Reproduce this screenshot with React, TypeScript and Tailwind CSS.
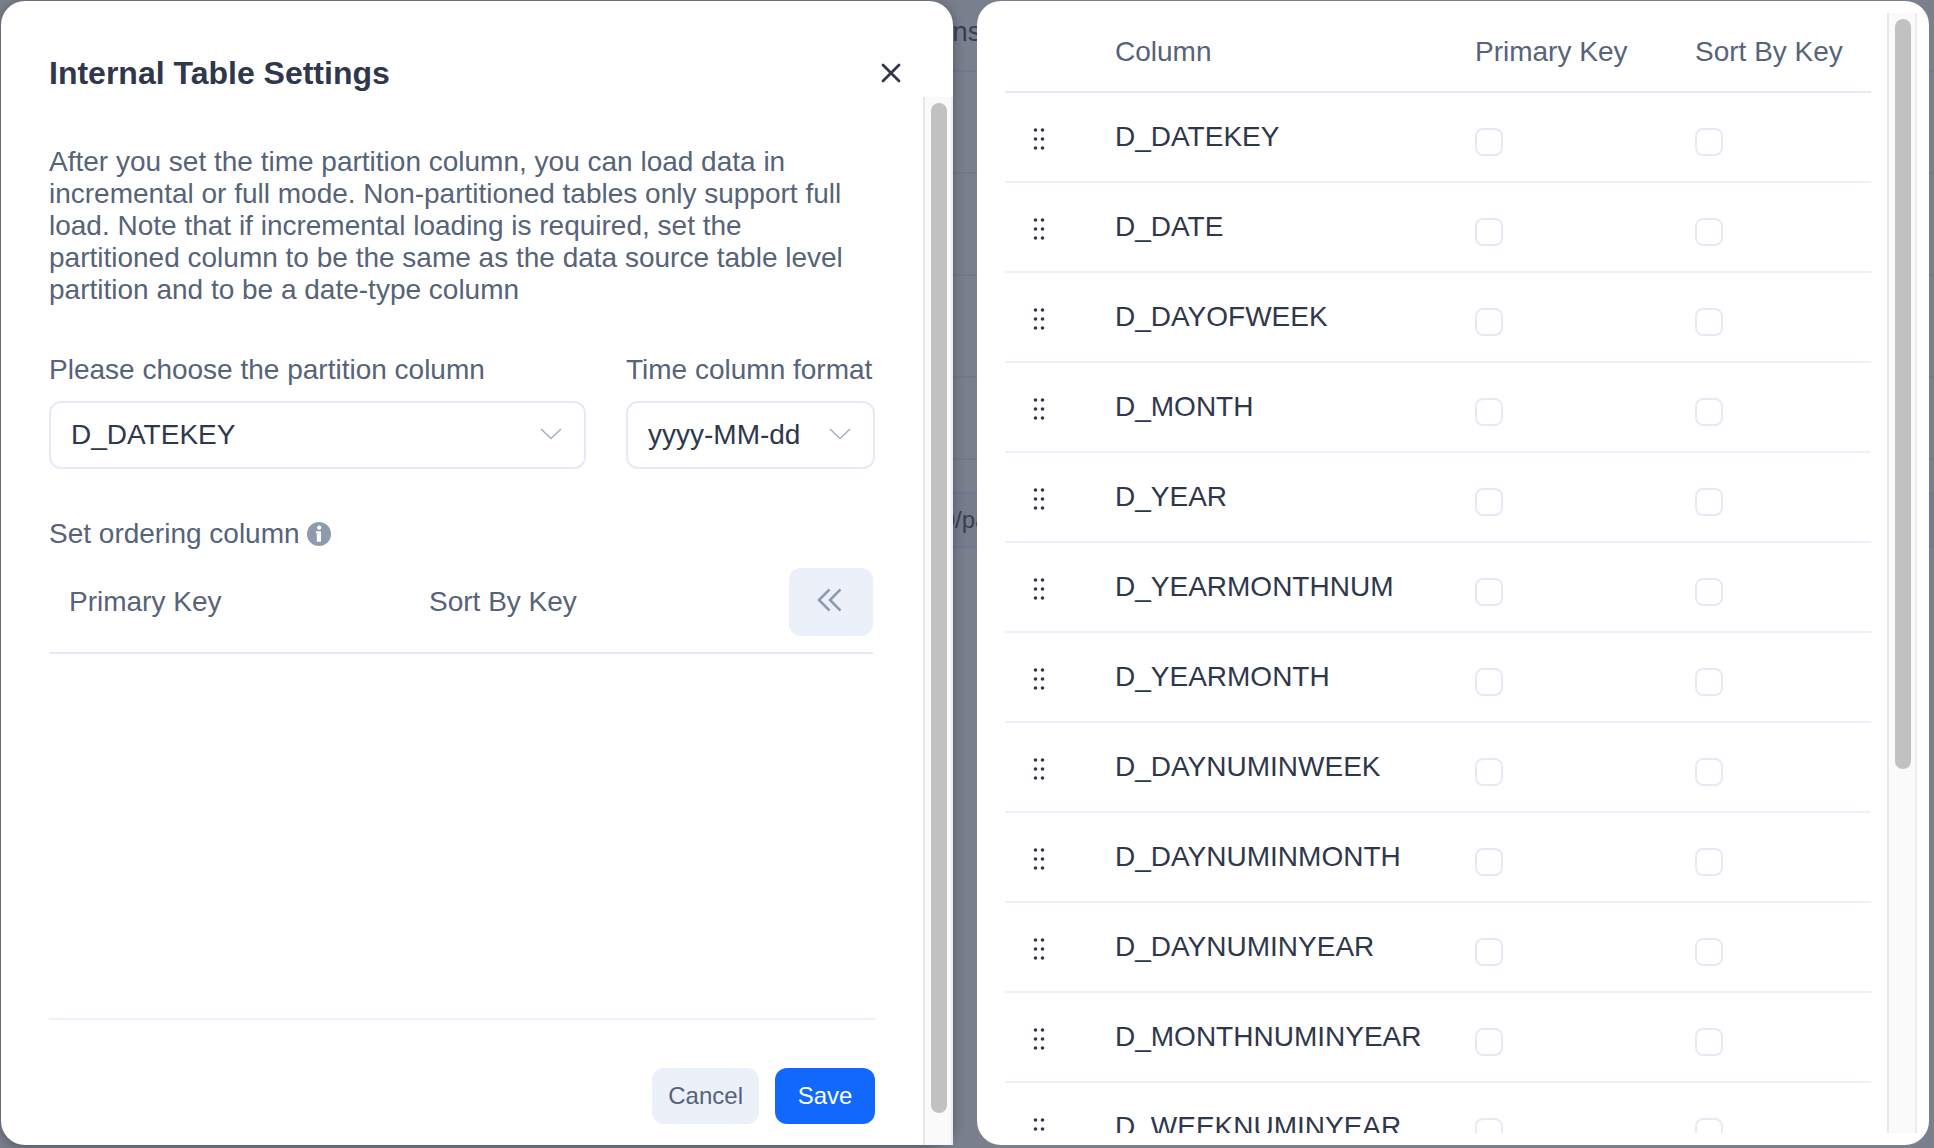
import React from "react";

const COLUMNS = [
  "D_DATEKEY",
  "D_DATE",
  "D_DAYOFWEEK",
  "D_MONTH",
  "D_YEAR",
  "D_YEARMONTHNUM",
  "D_YEARMONTH",
  "D_DAYNUMINWEEK",
  "D_DAYNUMINMONTH",
  "D_DAYNUMINYEAR",
  "D_MONTHNUMINYEAR",
  "D_WEEKNUMINYEAR",
];

function Backdrop() {
  return (
    <div
      aria-hidden="true"
      className="absolute inset-0 overflow-hidden text-[#383f53]"
    >
      <div className="flex h-[72px] justify-center border-b-2 border-[#717890] pt-4">ns</div>
      <div className="h-[102px] border-b-2 border-[#747988]" />
      <div className="h-[102px] border-b-2 border-[#747988]" />
      <div className="h-[102px] border-b-2 border-[#747988]" />
      <div className="h-[82px] border-b-2 border-[#747988]" />
      <div className="h-[34px] border-b-2 border-[#717890]" />
      <div className="flex h-[54px] items-center justify-center border-b-2 border-[#717890] bg-[#777c8c] pr-1 text-2xl">
        0/pa
      </div>
    </div>
  );
}

function Select({ id, options }: { id: string; options: string[] }) {
  return (
    <div className="relative">
      <select
        id={id}
        className="h-[68px] w-full appearance-none rounded-xl border-2 border-[#e6eaf5] bg-white pr-14 pl-5 text-[#2f374c]"
      >
        {options.map((o) => (
          <option key={o}>{o}</option>
        ))}
      </select>
      <svg
        className="pointer-events-none absolute top-6 right-6 h-5 w-[22px]"
        viewBox="0 0 22 20"
        fill="none"
        stroke="#a6b0c6"
        strokeWidth="1.6"
      >
        <path d="M1 4 11 13.5 21 4" />
      </svg>
    </div>
  );
}

function Track({ children }: { children: React.ReactNode }) {
  return (
    <div className="flex w-[30px] shrink-0 flex-col items-start border-x-2 border-l-[#e8e8e8] border-r-[#ededed] bg-[#fafafa] py-1.5 pl-1.5">
      {children}
    </div>
  );
}

function DragDots() {
  return (
    <svg className="mt-1 ml-7 h-6 w-3" viewBox="0 0 12 24" fill="#2f374c">
      {[3, 12, 21].map((y) => (
        <g key={y}>
          <circle cx="2.5" cy={y} r="1.8" />
          <circle cx="9.5" cy={y} r="1.8" />
        </g>
      ))}
    </svg>
  );
}

function Check({ label }: { label: string }) {
  return (
    <input
      type="checkbox"
      aria-label={label}
      className="mt-2.5 block size-7 appearance-none rounded-lg border-2 border-[#e6eaf5] bg-white checked:bg-[#1268fb]"
    />
  );
}

function SettingsDialog() {
  return (
    <section
      aria-labelledby="dialog-title"
      className="flex min-h-0 flex-col rounded-3xl bg-white shadow-[0_2px_12px_rgba(20,25,40,0.4)]"
    >
      <header className="flex h-24 shrink-0 items-center justify-between pt-12 pr-[50px] pl-12">
        <h1 id="dialog-title" className="text-[32px] leading-9 font-bold text-[#2f374c]">
          Internal Table Settings
        </h1>
        <button type="button" aria-label="Close" className="flex size-6 items-center justify-center">
          <svg
            className="size-5"
            viewBox="0 0 20 20"
            stroke="#2f374c"
            strokeWidth="2.8"
            strokeLinecap="round"
          >
            <path d="M2 2 18 18M18 2 2 18" />
          </svg>
        </button>
      </header>
      <div className="flex min-h-0 flex-1 justify-between">
        <div className="flex flex-1 flex-col overflow-hidden pt-[49px] pr-12 pb-[21px] pl-12">
          <p>
            After you set the time partition column, you can load data in incremental or full mode.
            Non-partitioned tables only support full load. Note that if incremental loading is
            required, set the partitioned column to be the same as the data source table level
            partition and to be a date-type column
          </p>
          <div className="mt-12 grid grid-cols-[1fr_249px] gap-x-10">
            <div className="flex flex-col gap-[15px]">
              <label htmlFor="partition">Please choose the partition column</label>
              <Select id="partition" options={COLUMNS} />
            </div>
            <div className="flex flex-col gap-[15px]">
              <label htmlFor="format" className="whitespace-nowrap">
                Time column format
              </label>
              <Select id="format" options={["yyyy-MM-dd", "yyyyMMdd", "yyyy-MM"]} />
            </div>
          </div>
          <div className="mt-[49px] flex items-center gap-[7px]">
            <h2>Set ordering column</h2>
            <svg className="size-6" viewBox="0 0 24 24" role="img" aria-label="Information">
              <circle cx="12" cy="12" r="12" fill="#8f9ab1" />
              <circle cx="12.2" cy="5.7" r="2.1" fill="#fff" />
              <path d="M8.8 9.2H14v10.6H9.8v-9H8.8z" fill="#fff" />
            </svg>
          </div>
          <div className="mr-0.5">
            <table className="mt-px w-full table-fixed border-collapse text-left">
              <colgroup>
                <col className="w-[360px]" />
                <col />
                <col className="w-[84px]" />
              </colgroup>
              <thead>
                <tr className="h-[102px] border-b-2 border-[#e6eaf5]">
                  <th className="pl-5 font-normal">Primary Key</th>
                  <th className="pl-5 font-normal">Sort By Key</th>
                  <th>
                    <button
                      type="button"
                      aria-label="Collapse columns"
                      className="flex h-[68px] w-full items-center justify-center rounded-xl bg-[#ecf0f8]"
                    >
                      <svg
                        className="mr-1 mb-1 h-6 w-6"
                        viewBox="0 0 24 24"
                        fill="none"
                        stroke="#8f9ab1"
                        strokeWidth="2.6"
                      >
                        <path d="M12.5 1.5 2 12 12.5 22.5M23.5 1.5 13 12 23.5 22.5" />
                      </svg>
                    </button>
                  </th>
                </tr>
              </thead>
            </table>
          </div>
          <footer className="mt-auto flex justify-end gap-4 border-t-2 border-[#ecf0fa] pt-12 text-2xl">
            <button type="button" className="h-14 rounded-xl bg-[#ecf0f8] px-4">
              Cancel
            </button>
            <button type="button" className="h-14 w-[100px] rounded-xl bg-[#1268fb] text-white">
              Save
            </button>
          </footer>
        </div>
        <Track>
          <div className="mb-[26px] w-4 flex-1 rounded-full bg-[#c1c1c1]" />
        </Track>
      </div>
    </section>
  );
}

function ColumnsPanel() {
  return (
    <section className="flex min-h-0 gap-4 rounded-3xl bg-white py-3 pr-3 pl-7">
      <div className="min-w-0 flex-1 overflow-hidden">
        <table className="w-full table-fixed border-collapse text-left">
          <colgroup>
            <col className="w-[90px]" />
            <col />
            <col className="w-[220px]" />
            <col className="w-[196px]" />
          </colgroup>
          <thead>
            <tr className="h-[79px] border-b-2 border-[#e6eaf5]">
              <th aria-label="Order" />
              <th className="pl-5 font-normal">Column</th>
              <th className="pl-5 font-normal">Primary Key</th>
              <th className="pl-5 font-normal">Sort By Key</th>
            </tr>
          </thead>
          <tbody>
            {COLUMNS.map((name) => (
              <tr key={name} className="h-[90px] border-b-2 border-[#ecf0fa]">
                <td>
                  <DragDots />
                </td>
                <td className="pl-5 text-[#2f374c]">{name}</td>
                <td className="pl-5">
                  <Check label={`${name} primary key`} />
                </td>
                <td className="pl-5">
                  <Check label={`${name} sort by key`} />
                </td>
              </tr>
            ))}
          </tbody>
        </table>
      </div>
      <Track>
        <div className="w-4 grow-[375] rounded-full bg-[#c1c1c1]" />
        <div className="grow-[179]" />
      </Track>
    </section>
  );
}

export default function App() {
  return (
    <div className="relative h-screen overflow-hidden bg-[#7a7f8d] font-['Liberation_Sans',Arial,sans-serif] text-[28px] leading-8 text-[#566378]">
      <Backdrop />
      <main className="relative grid h-full grid-cols-2 grid-rows-[minmax(0,1fr)] gap-x-6 pt-px pr-[5px] pb-[3px] pl-px">
        <SettingsDialog />
        <ColumnsPanel />
      </main>
    </div>
  );
}
